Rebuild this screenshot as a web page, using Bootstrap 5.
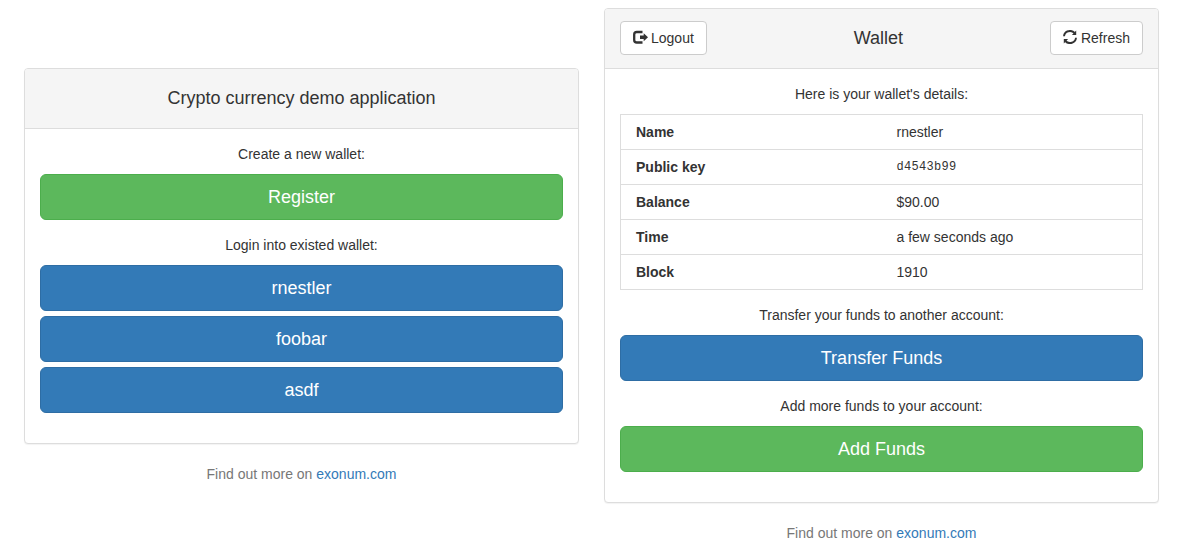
<!DOCTYPE html>
<html lang="en">
<head>
<meta charset="utf-8">
<meta name="viewport" content="width=device-width, initial-scale=1">
<title>Crypto currency demo application</title>
<link href="https://cdn.jsdelivr.net/npm/bootstrap@5.3.0/dist/css/bootstrap.min.css" rel="stylesheet">
<style>
body{font:14px/20px "Liberation Sans",Arial,sans-serif;color:#333;background:#fff;--bs-border-color:#ddd;--bs-body-color:#333}
.page{padding:8px 26px 0 24px;gap:25px}
.panel{width:555px;flex:none}
.panel-low{padding-top:60px}
.card{--bs-card-border-color:#ddd;--bs-card-border-radius:4px;--bs-card-inner-border-radius:3px;--bs-card-cap-bg:#f5f5f5;--bs-card-color:#333;color:#333;box-shadow:0 1px 1px rgba(0,0,0,.05)}
.card-header{height:60px;padding:0 15px 1px}
.card-header .title{font-size:18px;line-height:20px;font-weight:400}
.card-body{padding:15px 15px 30px}
.card-body p{margin:15px 0 10px}
.card-body p:first-child{margin-top:0}
.btn{--bs-btn-font-size:14px;--bs-btn-line-height:20px;--bs-btn-padding-x:12px;--bs-btn-padding-y:6px;--bs-btn-border-radius:4px}
.btn-lg{--bs-btn-font-size:18px;--bs-btn-line-height:24px;--bs-btn-padding-y:10px;--bs-btn-border-radius:6px}
.btn-primary{--bs-btn-bg:#337ab7;--bs-btn-border-color:#2e6da4}
.btn-success{--bs-btn-bg:#5cb85c;--bs-btn-border-color:#4cae4c}
.btn-light{--bs-btn-bg:#fff;--bs-btn-border-color:#ccc;--bs-btn-color:#333}
.stack{gap:5px}
.details{border:1px solid #ddd}
.details .row{--bs-gutter-x:0}
.details .row+.row{border-top:1px solid #ddd}
.details .row>div{padding:7px 15px}
.key-value{font:12px/20px "Liberation Mono",monospace;letter-spacing:.3px;color:#333;display:block}
.foot{margin-top:20px;color:#777}
.foot a{color:#337ab7}
.icon{width:15px;height:14px;display:block;margin:0 3px 2px 0}
</style>
<script src="https://cdn.jsdelivr.net/npm/bootstrap@5.3.0/dist/js/bootstrap.bundle.min.js"></script>
</head>
<body>
<main class="page d-flex align-items-start text-center">
  <section class="panel panel-low">
    <div class="card">
      <div class="card-header d-flex align-items-center justify-content-center"><h1 class="title m-0">Crypto currency demo application</h1></div>
      <div class="card-body">
        <p>Create a new wallet:</p>
        <button class="btn btn-success btn-lg w-100 d-block">Register</button>
        <p>Login into existed wallet:</p>
        <div class="stack d-grid">
          <button class="btn btn-primary btn-lg">rnestler</button>
          <button class="btn btn-primary btn-lg">foobar</button>
          <button class="btn btn-primary btn-lg">asdf</button>
        </div>
      </div>
    </div>
    <p class="foot mb-0">Find out more on <a class="text-decoration-none" href="#">exonum.com</a></p>
  </section>
  <section class="panel">
    <div class="card">
      <div class="card-header d-flex align-items-center justify-content-between">
        <button class="btn btn-light d-flex align-items-center"><svg class="icon" viewBox="0 0 15 14" fill="none"><path d="M9.5 2H3.8Q1.2 2 1.2 4.6V9.9Q1.2 12.5 3.8 12.5H9.5" stroke="#333" stroke-width="2.3"/><path d="M7 5.5h3.7V3.3L15 7.3l-4.3 4V9.1H7z" fill="#333"/></svg>Logout</button>
        <h2 class="title m-0">Wallet</h2>
        <button class="btn btn-light d-flex align-items-center"><svg class="icon" viewBox="0 0 15 14" fill="none"><path d="M1 6.2A6 5.6 0 0 1 11.6 3M13 7.8A6 5.6 0 0 1 2.4 11" stroke="#333" stroke-width="1.9"/><path d="M13.2.6v4.4H8.9zM.8 13.4V9h4.3z" fill="#333"/></svg>Refresh</button>
      </div>
      <div class="card-body">
        <p>Here is your wallet's details:</p>
        <div class="details text-start">
          <div class="row"><div class="col-6 fw-bold">Name</div><div class="col-6">rnestler</div></div>
          <div class="row"><div class="col-6 fw-bold">Public key</div><div class="col-6"><code class="key-value">d4543b99</code></div></div>
          <div class="row"><div class="col-6 fw-bold">Balance</div><div class="col-6">$90.00</div></div>
          <div class="row"><div class="col-6 fw-bold">Time</div><div class="col-6">a few seconds ago</div></div>
          <div class="row"><div class="col-6 fw-bold">Block</div><div class="col-6">1910</div></div>
        </div>
        <p>Transfer your funds to another account:</p>
        <button class="btn btn-primary btn-lg w-100 d-block">Transfer Funds</button>
        <p>Add more funds to your account:</p>
        <button class="btn btn-success btn-lg w-100 d-block">Add Funds</button>
      </div>
    </div>
    <p class="foot mb-0">Find out more on <a class="text-decoration-none" href="#">exonum.com</a></p>
  </section>
</main>
</body>
</html>
